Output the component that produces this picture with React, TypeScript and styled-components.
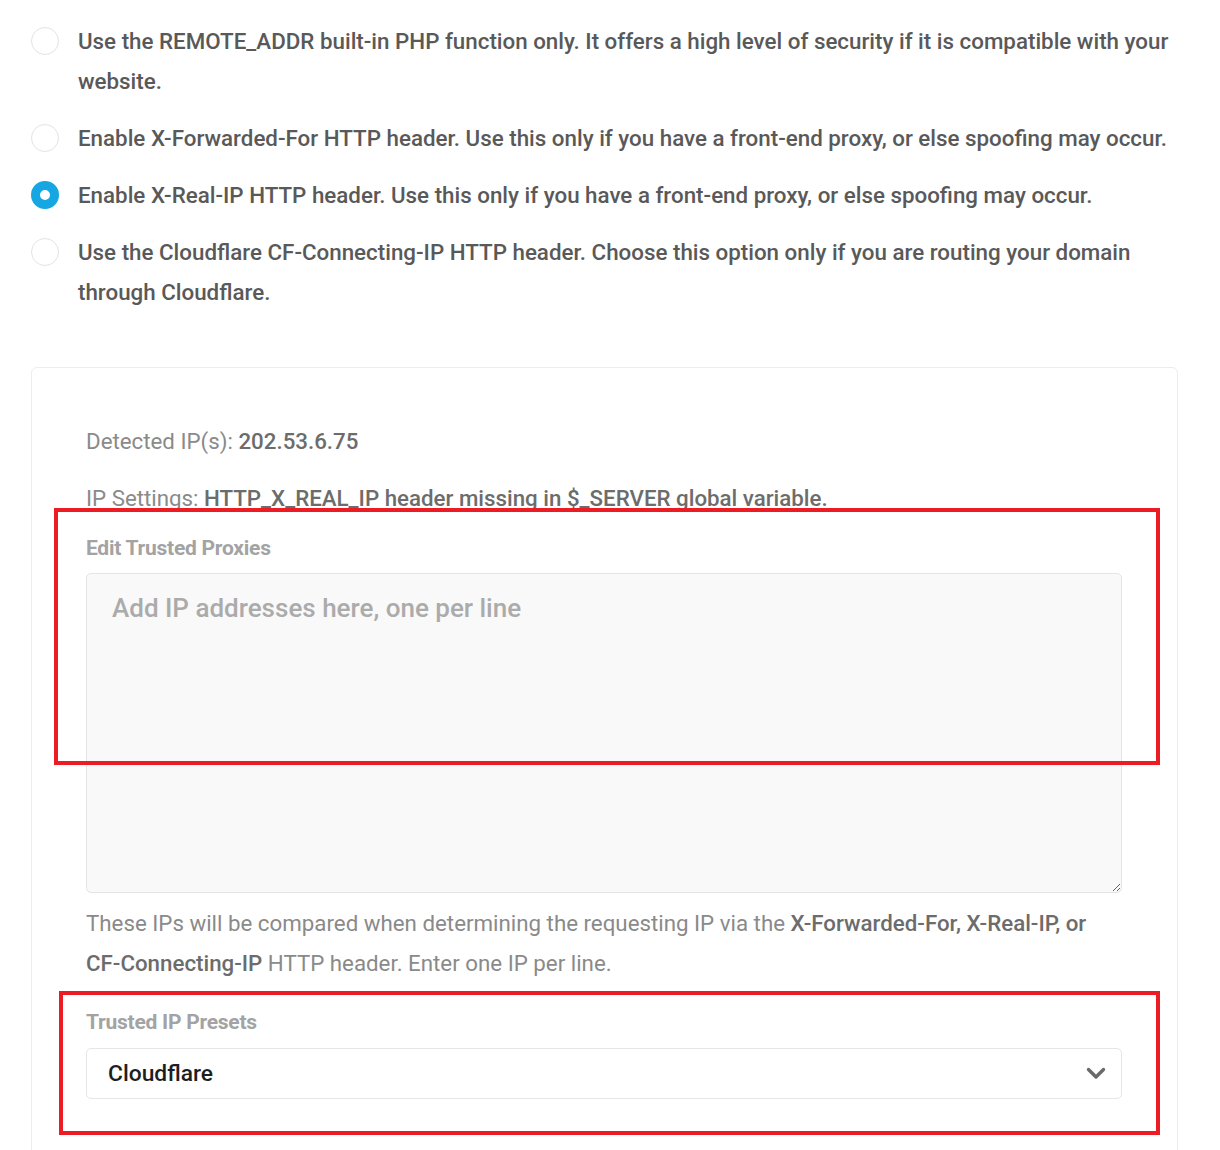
import styled, { createGlobalStyle } from "styled-components";

const GlobalStyle = createGlobalStyle`
  body {
    margin: 0;
    background: #ffffff;
    font-family: Roboto, "Liberation Sans", Arial, sans-serif;
  }
`;

const Page = styled.div`
  padding: 21px 42px 0 31px;
`;

const RadioList = styled.div`
  display: flex;
  flex-direction: column;
  gap: 17px;
`;

const RadioRow = styled.label`
  display: flex;
  align-items: flex-start;
  gap: 19px;
  font-size: 22.35px;
  font-weight: 500;
  line-height: 40px;
  color: #595959;
`;

const RadioDot = styled.span<{ $checked?: boolean }>`
  flex: 0 0 auto;
  box-sizing: border-box;
  width: 28px;
  height: 28px;
  margin-top: 6px;
  border-radius: 50%;
  background: #ffffff;
  border: ${(p) => (p.$checked ? "9px solid #16a7e2" : "1px solid #e3e3e3")};
`;

const Card = styled.div`
  position: relative;
  margin-top: 55px;
  border: 1px solid #ededed;
  border-radius: 6px;
  padding: 53px 55px 60px 54px;
`;

const InfoLine = styled.p`
  margin: 0 0 17px;
  font-size: 22.3px;
  line-height: 40px;
  color: #8a8a8a;

  strong {
    font-weight: 500;
    color: #6c6c6c;
  }
`;

const FieldLabel = styled.div<{ $gap?: number }>`
  margin-top: ${(p) => p.$gap ?? 0}px;
  font-size: 21px;
  line-height: 26px;
  font-weight: 700;
  letter-spacing: -0.25px;
  color: #a3a3a3;
`;

const ProxyInput = styled.textarea`
  display: block;
  box-sizing: border-box;
  width: 100%;
  height: 320px;
  margin-top: 12px;
  padding: 16px 25px;
  border: 1px solid #e4e4e4;
  border-radius: 5px;
  background: #f9f9f9;
  font-family: inherit;
  font-size: 26px;
  font-weight: 500;
  line-height: 36px;
  color: #444;
  resize: vertical;
  outline: none;

  &::placeholder {
    color: #ababab;
  }
`;

const HelpText = styled.p`
  margin: 10px 0 0;
  font-size: 22.3px;
  line-height: 40px;
  color: #8a8a8a;

  strong {
    font-weight: 500;
    color: #6c6c6c;
  }
`;

const NoBreak = styled.strong`
  white-space: nowrap;
`;

const SelectField = styled.div`
  display: flex;
  align-items: center;
  justify-content: space-between;
  box-sizing: border-box;
  height: 51px;
  margin-top: 13px;
  padding: 0 15px 0 21px;
  border: 1px solid #e6e6e6;
  border-radius: 5px;
  background: #ffffff;
  font-size: 22.8px;
  font-weight: 500;
  color: #1e1e1e;
`;

const Highlight = styled.div<{ $top: number; $left: number; $w: number; $h: number }>`
  position: absolute;
  top: ${(p) => p.$top}px;
  left: ${(p) => p.$left}px;
  width: ${(p) => p.$w}px;
  height: ${(p) => p.$h}px;
  box-sizing: border-box;
  border: 4px solid #ec1c24;
  pointer-events: none;
`;

const options = [
  {
    text: "Use the REMOTE_ADDR built-in PHP function only. It offers a high level of security if it is compatible with your website.",
    checked: false,
  },
  {
    text: "Enable X-Forwarded-For HTTP header. Use this only if you have a front-end proxy, or else spoofing may occur.",
    checked: false,
  },
  {
    text: "Enable X-Real-IP HTTP header. Use this only if you have a front-end proxy, or else spoofing may occur.",
    checked: true,
  },
  {
    text: "Use the Cloudflare CF-Connecting-IP HTTP header. Choose this option only if you are routing your domain through Cloudflare.",
    checked: false,
  },
];

function Chevron() {
  return (
    <svg width="20" height="13" viewBox="0 0 20 13">
      <polyline
        points="2.5,2.5 10,10 17.5,2.5"
        fill="none"
        stroke="#6a6a6a"
        strokeWidth="3.4"
        strokeLinecap="round"
        strokeLinejoin="round"
      />
    </svg>
  );
}

export default function App() {
  return (
    <>
      <GlobalStyle />
      <Page>
        <RadioList>
          {options.map((o) => (
            <RadioRow key={o.text}>
              <RadioDot $checked={o.checked} />
              <span>{o.text}</span>
            </RadioRow>
          ))}
        </RadioList>

        <Card>
          <InfoLine>
            Detected IP(s): <strong>202.53.6.75</strong>
          </InfoLine>
          <InfoLine>
            IP Settings: <strong>HTTP_X_REAL_IP header missing in $_SERVER global variable.</strong>
          </InfoLine>

          <FieldLabel $gap={1}>Edit Trusted Proxies</FieldLabel>
          <ProxyInput placeholder="Add IP addresses here, one per line" />
          <HelpText>
            These IPs will be compared when determining the requesting IP via the{" "}
            <strong>X-Forwarded-For, X-Real-IP, or</strong> <NoBreak>CF-Connecting-IP</NoBreak> HTTP header. Enter
            one IP per line.
          </HelpText>

          <FieldLabel $gap={26}>Trusted IP Presets</FieldLabel>
          <SelectField>
            <span>Cloudflare</span>
            <Chevron />
          </SelectField>

          <Highlight $top={140} $left={22} $w={1106} $h={257} />
          <Highlight $top={623} $left={27} $w={1101} $h={144} />
        </Card>
      </Page>
    </>
  );
}
